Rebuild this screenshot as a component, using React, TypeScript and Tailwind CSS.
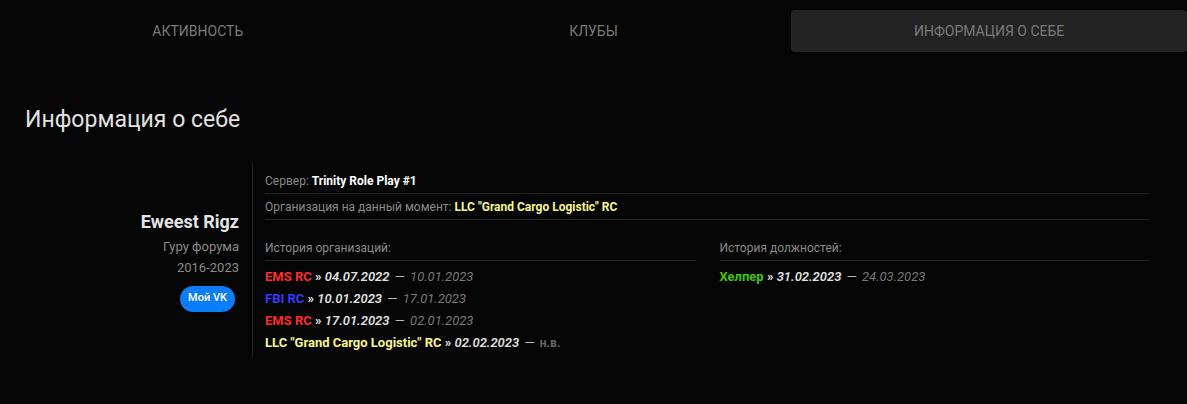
import React from "react";

const tabs = ["Активность", "Клубы", "Информация о себе"];

const orgHistory = [
    { name: "EMS RC", color: "text-[#ff2b2b]", from: "04.07.2022", to: "10.01.2023" },
    { name: "FBI RC", color: "text-[#3838ff]", from: "10.01.2023", to: "17.01.2023" },
    { name: "EMS RC", color: "text-[#ff2b2b]", from: "17.01.2023", to: "02.01.2023" },
    { name: 'LLC "Grand Cargo Logistic" RC', color: "text-[#f7f78c]", from: "02.02.2023", to: null },
];

const postHistory = [
    { name: "Хелпер", color: "text-[#3fc400]", from: "31.02.2023", to: "24.03.2023" },
];

type Entry = { name: string; color: string; from: string; to: string | null };

function HistoryRow({ e }: { e: Entry }) {
    return (
        <div className="text-[13px] leading-[22px] font-bold">
            <span className={e.color}>{e.name}</span>
            <span className="text-[#e6e6e6]"> » </span>
            <span className="italic text-[#e0e0e0] font-semibold">{e.from}</span>
            <span className="text-[#bdbdbd] font-normal mx-[2px]"> — </span>
            {e.to ? (
                <span className="italic font-normal text-[#777]">{e.to}</span>
            ) : (
                <span className="text-[12px] text-[#666]">н.в.</span>
            )}
        </div>
    );
}

export default function App() {
    return (
        <div className="min-h-[404px] w-full bg-[#050505] font-['Roboto',sans-serif] pt-[10px]">
            {/* --- TABS --- */}
            <div className="grid grid-cols-3 h-[42px]">
                {tabs.map((t, i) => (
                    <div
                        key={t}
                        className={`flex items-center justify-center uppercase text-[14px] text-[#7a7a7a] rounded-[4px] ${i === 2 ? "bg-[#232323]" : ""}`}
                    >
                        {t}
                    </div>
                ))}
            </div>

            <h1 className="mt-[54px] pl-[25px] text-[23px] leading-[27px] text-[#e2e2e2]">Информация о себе</h1>

            {/* --- PROFILE --- */}
            <div className="mt-[29px] flex">
                <div className="w-[253px] shrink-0 border-r border-[#1f1f1f] pr-[13px] flex flex-col items-end justify-center text-right">
                    <div className="text-[18px] font-bold leading-[22px] text-[#e4e4e4] mt-[2px]">Eweest Rigz</div>
                    <div className="text-[13px] leading-[21px] text-[#8a8a8a] mt-[3px]">Гуру форума</div>
                    <div className="text-[13px] leading-[21px] text-[#8a8a8a]">2016-2023</div>
                    <div className="mt-[8px] mr-[4px] h-[26px] px-[8px] rounded-full bg-[#0a7df9] text-white text-[11px] font-medium flex items-center">
                        Мой VK
                    </div>
                </div>

                <div className="flex-1 pl-[12px] pr-[37px] text-[12px] pb-[4px]">
                    <div className="pt-[10px] pb-[3px] leading-[18px] border-b border-[#222]">
                        <span className="text-[#8a8a8a]">Сервер: </span>
                        <span className="text-white font-bold">Trinity Role Play #1</span>
                    </div>
                    <div className="pt-[4px] pb-[3px] leading-[18px] border-b border-[#222]">
                        <span className="text-[#8a8a8a]">Организация на данный момент: </span>
                        <span className="text-[#f7f78c] font-bold">LLC "Grand Cargo Logistic" RC</span>
                    </div>

                    <div className="mt-[19px] grid grid-cols-2 gap-x-[24px]">
                        <div>
                            <div className="pb-[3px] leading-[18px] border-b border-[#222] text-[#8a8a8a]">История организаций:</div>
                            <div className="pt-[5px]">
                                {orgHistory.map((e, i) => (
                                    <HistoryRow key={i} e={e} />
                                ))}
                            </div>
                        </div>
                        <div>
                            <div className="pb-[3px] leading-[18px] border-b border-[#222] text-[#8a8a8a]">История должностей:</div>
                            <div className="pt-[5px]">
                                {postHistory.map((e, i) => (
                                    <HistoryRow key={i} e={e} />
                                ))}
                            </div>
                        </div>
                    </div>
                </div>
            </div>
        </div>
    );
}
